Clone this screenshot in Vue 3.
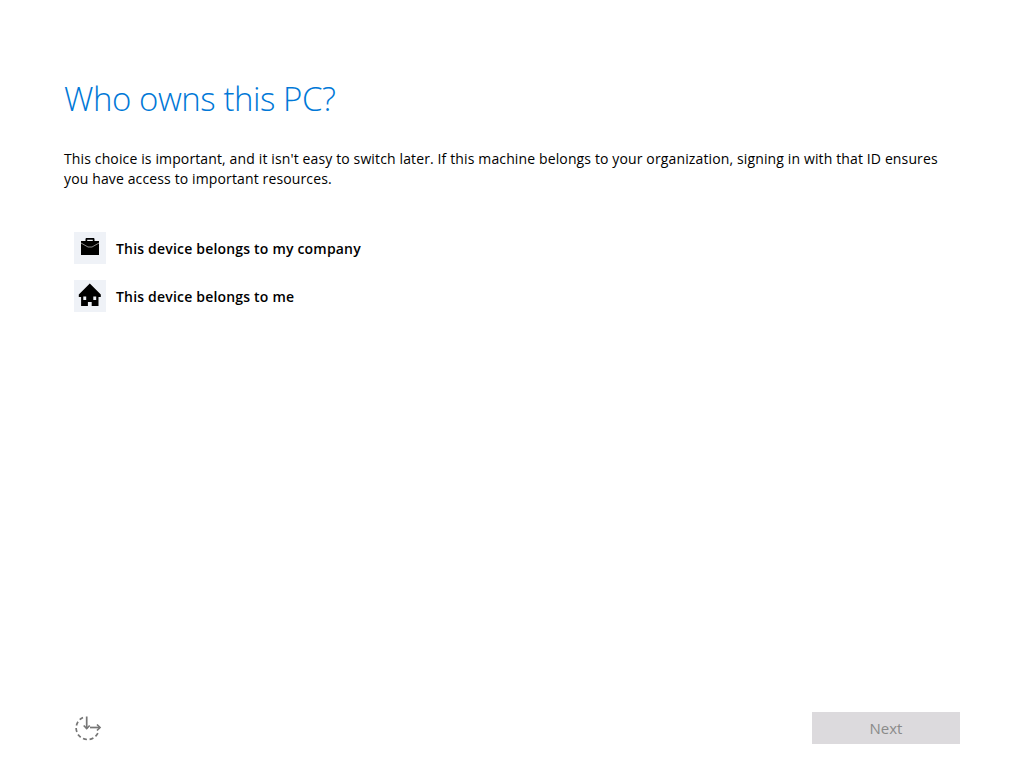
<script setup>
const options = [
  { id: 'company', label: 'This device belongs to my company' },
  { id: 'me', label: 'This device belongs to me' },
]
</script>

<template>
  <div class="page">
    <main class="content">
      <h1 class="title">Who owns this PC?</h1>
      <p class="desc">This choice is important, and it isn't easy to switch later. If this machine belongs to your organization, signing in with that ID ensures you have access to important resources.</p>
      <ul class="options">
        <li v-for="o in options" :key="o.id" class="option">
          <span class="tile">
            <svg v-if="o.id === 'company'" width="32" height="32" viewBox="0 0 32 32">
              <path d="M11.500 9.500V7.200C11.500 6.500 12 6 12.700 6h6.600c.7 0 1.200.5 1.200 1.200v2.300h-1.700V7.700h-5.600v1.800z" fill="#000"/>
              <path d="M7 9h18v14H7z" fill="#000"/>
              <path d="M7 11 14 15h4L25 11" fill="none" stroke="#8c8c8c" stroke-width="1"/>
            </svg>
            <svg v-else width="32" height="32" viewBox="0 0 32 32">
              <path fill-rule="evenodd" d="M15.800 3.500 26.800 14.500v2.500h-2.300v9h-6.800v-4h-3.800v4H7.100v-9H4.800v-2.500z M9.300 16.500v3.500h2.900v-3.500z M19.300 16.500v3.500h2.900v-3.500z" fill="#000"/>
            </svg>
          </span>
          <span class="label">{{ o.label }}</span>
        </li>
      </ul>
    </main>
    <footer class="footer">
      <svg width="32" height="32" viewBox="0 0 32 32" fill="none" stroke="#767676" stroke-width="1.700">
        <path d="M11 5.500A11.500 11.500 0 1 0 26 21" stroke-dasharray="4 2.600"/>
        <path d="M14.700 4.500V16.500"/>
        <path d="M11.700 13.500 14.700 16.500l3-3"/>
        <path d="M18 15.500h10"/>
        <path d="M25 12.500l3 3-3 3"/>
      </svg>
      <button class="next" disabled>Next</button>
    </footer>
  </div>
</template>

<style>
html, body { margin: 0; background: #fff; }
</style>

<style scoped>
.page {
  width: 1024px;
  height: 768px;
  box-sizing: border-box;
  padding: 0 64px 24px;
  display: flex;
  flex-direction: column;
  font-family: "Open Sans", "Noto Sans", sans-serif;
  color: #000;
}
.content { flex: 1; }
.title {
  margin: 76px 0 0;
  font-size: 33px;
  line-height: 46px;
  font-weight: 300;
  letter-spacing: -0.45px;
  color: #0078d7;
}
.desc {
  margin: 27px 0 0;
  font-size: 14px;
  line-height: 20px;
  letter-spacing: 0.13px;
}
.options {
  list-style: none;
  margin: 43px 0 0;
  padding: 0 0 0 10px;
  display: flex;
  flex-direction: column;
  gap: 16px;
}
.option { display: flex; align-items: center; gap: 10px; height: 32px; }
.tile {
  width: 32px;
  height: 32px;
  background: #eff2f7;
  display: flex;
}
.label { font-size: 14px; font-weight: 600; letter-spacing: 0.19px; }
.footer {
  display: flex;
  justify-content: space-between;
  align-items: center;
  height: 32px;
  padding: 0 0 0 8px;
}
.next {
  width: 148px;
  height: 32px;
  border: 0;
  background: #dcdadd;
  color: #8a8a8a;
  font: inherit;
  font-size: 15px;
}
</style>
